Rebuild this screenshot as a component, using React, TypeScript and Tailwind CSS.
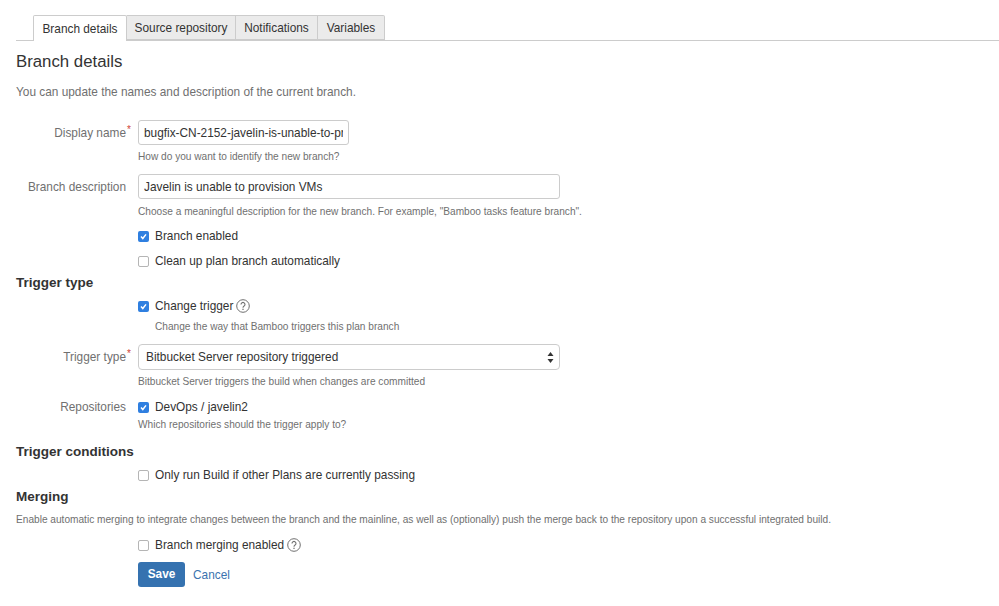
import React from 'react';

function HelpIcon() {
    return (
        <svg width="14" height="14" viewBox="0 0 14 14" fill="none" className="ml-[3px] shrink-0">
            <circle cx="7" cy="7" r="6.3" stroke="#707070" strokeWidth="1" />
            <path d="M5 5.4a2 2 0 1 1 3.1 1.7c-.7.4-1.1.8-1.1 1.6" stroke="#707070" strokeWidth="1.1" />
            <rect x="6.4" y="9.7" width="1.2" height="1.3" fill="#707070" />
        </svg>
    );
}

function Checkbox({ checked = false }: { checked?: boolean }) {
    if (checked) {
        return (
            <span className="w-[11px] h-[11px] rounded-[2px] bg-[#2f7fe0] flex items-center justify-center shrink-0">
                <svg width="9" height="9" viewBox="0 0 9 9" fill="none">
                    <path d="M2 4.6l1.8 1.9L7 2.4" stroke="white" strokeWidth="1.5" />
                </svg>
            </span>
        );
    }
    return <span className="w-[11px] h-[11px] rounded-[2px] border border-[#b5b5b5] bg-white shrink-0" />;
}

function Row({ label, required, className, children }: {
    label?: string;
    required?: boolean;
    className?: string;
    children: React.ReactNode;
}) {
    return (
        <div className={`flex items-center ${className ?? ''}`}>
            <div className="w-[110px] mr-3 pt-[2px] text-right text-[11.85px] text-[#707070] relative shrink-0">
                {label}
                {required && <span className="absolute -right-[5px] -top-[1px] text-[10px] text-[#d04437]">*</span>}
            </div>
            {children}
        </div>
    );
}

function Help({ children, className }: { children: React.ReactNode; className?: string }) {
    return (
        <div className={`text-[10.15px] leading-[14px] text-[#707070] ${className ?? 'pl-[122px]'}`}>
            {children}
        </div>
    );
}

function CheckRow({ checked, text, help, className }: { checked?: boolean; text: string; help?: boolean; className?: string }) {
    return (
        <Row className={`h-[16px] ${className ?? ''}`}>
            <Checkbox checked={checked} />
            <span className="ml-[6px] pt-[2px] text-[11.85px] text-[#333333]">{text}</span>
            {help && <HelpIcon />}
        </Row>
    );
}

const tabs = [
    { name: 'Source repository', width: 'w-[109px]' },
    { name: 'Notifications', width: 'w-[82px]' },
    { name: 'Variables', width: 'w-[67px]' },
];

export default function App() {
    return (
        <div className="w-[999px] h-[606px] bg-white overflow-hidden pl-4 pt-[15px] font-['Liberation_Sans',Arial,sans-serif]">
            {/* Tabs */}
            <div className="flex h-[26px] pl-[17px] border-b border-[#cccccc] text-[11.85px] text-[#333333]">
                <div className="h-[26px] w-[94px] pt-[2px] flex items-center justify-center bg-white border border-b-0 border-[#cccccc] rounded-t-[2px]">
                    Branch details
                </div>
                {tabs.map((tab) => (
                    <div
                        key={tab.name}
                        className={`h-[25px] ${tab.width} pt-[2px] flex items-center justify-center bg-[#ebebeb] border border-l-0 border-[#cccccc] last:rounded-tr-[2px]`}
                    >
                        {tab.name}
                    </div>
                ))}
            </div>

            <h2 className="mt-[11px] text-[16.8px] leading-[20px] text-[#333333]">Branch details</h2>
            <p className="mt-[13px] text-[11.85px] leading-[14px] text-[#707070]">
                You can update the names and description of the current branch.
            </p>

            <Row label="Display name" required className="mt-[21px]">
                <input
                    readOnly
                    value="bugfix-CN-2152-javelin-is-unable-to-provision-vms"
                    className="w-[211px] h-[25px] px-[5px] border border-[#cccccc] rounded-[3px] text-[11.85px] text-[#333333] outline-none"
                />
            </Row>
            <Help className="pl-[122px] mt-[5px]">How do you want to identify the new branch?</Help>

            <Row label="Branch description" className="mt-[10px]">
                <input
                    readOnly
                    value="Javelin is unable to provision VMs"
                    className="w-[422px] h-[25px] px-[5px] border border-[#cccccc] rounded-[3px] text-[11.85px] text-[#333333] outline-none"
                />
            </Row>
            <Help className="pl-[122px] mt-[6px]">
                Choose a meaningful description for the new branch. For example, "Bamboo tasks feature branch".
            </Help>

            <CheckRow checked text="Branch enabled" className="mt-[9px]" />
            <CheckRow text="Clean up plan branch automatically" className="mt-[9px]" />

            <h3 className="mt-[5px] text-[13.5px] leading-[18px] font-bold text-[#333333]">Trigger type</h3>

            <CheckRow checked text="Change trigger" help className="mt-[6px]" />
            <Help className="pl-[139px] mt-[6px]">Change the way that Bamboo triggers this plan branch</Help>

            <Row label="Trigger type" required className="mt-[10px]">
                <div className="w-[422px] h-[26px] pl-[7px] pr-[5px] flex items-center justify-between border border-[#cccccc] rounded-[4px] text-[11.85px] text-[#333333]">
                    <span className="pt-[2px]">Bitbucket Server repository triggered</span>
                    <svg width="7" height="11" viewBox="0 0 7 11" fill="#333333">
                        <path d="M3.5 0L6.5 4H.5z" />
                        <path d="M3.5 11L.5 7h6z" />
                    </svg>
                </div>
            </Row>
            <Help className="pl-[122px] mt-[5px]">Bitbucket Server triggers the build when changes are committed</Help>

            <Row label="Repositories" className="h-[16px] mt-[10px]">
                <Checkbox checked />
                <span className="ml-[6px] pt-[2px] text-[11.85px] text-[#333333]">DevOps / javelin2</span>
            </Row>
            <Help className="pl-[122px] mt-[3px]">Which repositories should the trigger apply to?</Help>

            <h3 className="mt-[11px] text-[13.5px] leading-[18px] font-bold text-[#333333]">Trigger conditions</h3>
            <CheckRow text="Only run Build if other Plans are currently passing" className="mt-[6px]" />

            <h3 className="mt-[5px] text-[13.5px] leading-[18px] font-bold text-[#333333]">Merging</h3>
            <Help className="mt-[7px]">
                Enable automatic merging to integrate changes between the branch and the mainline, as well as (optionally) push the merge back to the repository upon a successful integrated build.
            </Help>
            <CheckRow text="Branch merging enabled" help className="mt-[10px]" />

            <Row className="mt-[9px]">
                <button type="button" className="w-[47px] h-[25px] bg-[#3572b0] rounded-[3px] text-[11.85px] font-bold text-white">
                    Save
                </button>
                <a className="ml-[8px] pt-[2px] text-[11.85px] text-[#3b73af]">Cancel</a>
            </Row>
        </div>
    );
}
